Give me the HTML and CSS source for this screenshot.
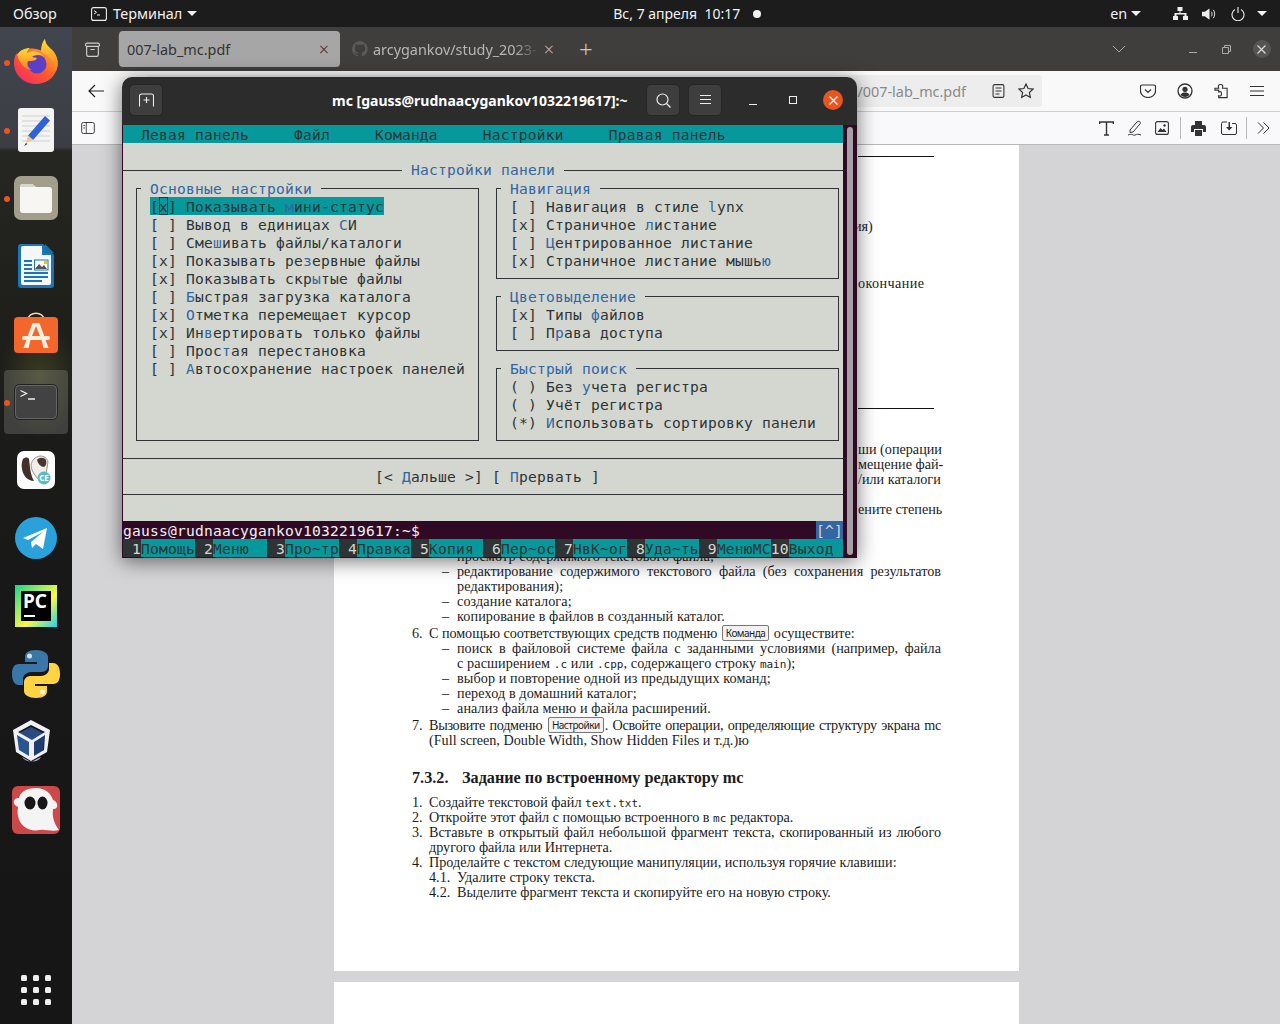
FILE: index.html
```html
<!DOCTYPE html>
<html lang="ru">
<head>
    <meta charset="UTF-8">
    <title>mc</title>
    <link rel="stylesheet" href="styles.css">
</head>
<body>
<div class="desktop">
    <!-- GNOME top bar -->
    <header class="topbar">
        <span class="overview">Обзор</span>
        <span class="app-menu">
            <svg class="ic-term" viewBox="0 0 16 14"><rect x=".6" y=".6" width="14.8" height="12.8" rx="2" fill="none" stroke="#eee" stroke-width="1.1"/><path d="M3 3.5l2.5 1.8L3 7M6 8h3" fill="none" stroke="#eee"/></svg>
            Терминал
            <i class="caret"></i>
        </span>
        <span class="clock">Вс, 7 апреля&nbsp; 10:17</span>
        <i class="notify-dot"></i>
        <span class="lang">en</span>
        <i class="caret caret-lang"></i>
        <span class="tray">
            <svg viewBox="0 0 16 14" width="16" height="14"><path d="M5.5 0h5v4h-2v2h6v3h1.500v4h-5V9h1.500V7.500h-8V9H6v4H1V9h1.500V6h5V4h-2z" fill="#eee"/></svg>
            <svg viewBox="0 0 16 14" width="15" height="14"><path d="M0 4.500h3L8 1v12L3 9.500H0z" fill="#eee"/><path d="M10 4.500c1 1.500 1 3.500 0 5M12 2.500c2 2.500 2 6.500 0 9" fill="none" stroke="#eee"/></svg>
            <svg viewBox="0 0 14 14" width="14" height="14"><path d="M4 2.500a6 6 0 1 0 6 0M7 0v6" fill="none" stroke="#eee" stroke-width="1.100"/></svg>
            <i class="caret"></i>
        </span>
    </header>

    <div class="workspace">
        <!-- dock -->
        <nav class="dock">
            <div class="dock-item running">
                <svg viewBox="0 0 48 48" width="48" height="48">
                    <defs>
                        <linearGradient id="ffa" x1="0" y1="1" x2=".8" y2="0"><stop offset="0" stop-color="#f0246e"/><stop offset=".5" stop-color="#ff5a2c"/><stop offset="1" stop-color="#ffc02e"/></linearGradient>
                        <linearGradient id="ffb" x1="0" y1="0" x2="0" y2="1"><stop offset="0" stop-color="#ffdd3c"/><stop offset="1" stop-color="#ff7a1e"/></linearGradient>
                    </defs>
                    <path d="M33 1c0 5 4 8 8 12 5 6 6 14 3 20-3 8-11 13-20 13C12 46 2 37 2 25c0-4 1-8 3-10l1 5c2-5 6-8 11-9 4-1 9 0 13 2-1-4 0-9 3-12z" fill="url(#ffa)"/>
                    <circle cx="25" cy="26" r="9.500" fill="#5d3fc6"/>
                    <path d="M33 1c0 5 4 8 8 12 5 6 6 14 3 20-1-5-2-10-7-14-3-3-6-3-8-6 0-5 2-9 4-12z" fill="url(#ffb)"/>
                    <path d="M5 17c3-5 8-7 13-7-2 1-3 3-3 5 5-3 12-2 16 3-4-2-9-1-11 1l5 1c-1 3-5 3-9 3-2 3 0 7 4 9-6 0-12-5-15-15z" fill="url(#ffb)"/>
                </svg>
            </div>
            <div class="dock-item running">
                <svg viewBox="0 0 36 44" width="36" height="44">
                    <rect width="36" height="44" rx="3" fill="#f4f4f2"/>
                    <path d="M4 8h28M4 13h28M4 18h28M4 23h28M4 28h28M4 33h28" stroke="#cfcfd2"/>
                    <path d="M27 8l5 4.500-17 19.500-5-4.500z" fill="#2f62d6"/>
                    <path d="M10 27.500l5 4.500-7 3z" fill="#e8c99c"/><path d="M6 38l2-3 1.500 1z" fill="#333"/>
                </svg>
            </div>
            <div class="dock-item running">
                <svg viewBox="0 0 44 44" width="44" height="44">
                    <rect width="44" height="44" rx="7" fill="#a39e8c"/>
                    <path d="M6 11a3 3 0 0 1 3-3h9l4 3h13a3 3 0 0 1 3 3v20a3 3 0 0 1-3 3H9a3 3 0 0 1-3-3z" fill="#f7f6f3"/>
                    <path d="M6 11a3 3 0 0 1 3-3h9l4 3z" fill="#d9d6c9"/>
                </svg>
            </div>
            <div class="dock-item">
                <svg viewBox="0 0 36 44" width="36" height="44">
                    <path d="M3 0h22l11 11v30a3 3 0 0 1-3 3H3a3 3 0 0 1-3-3V3a3 3 0 0 1 3-3z" fill="#1b75b6"/>
                    <path d="M5 2h19v9h9v28a2 2 0 0 1-2 2H5a2 2 0 0 1-2-2V4a2 2 0 0 1 2-2z" fill="#f5f7f8"/>
                    <path d="M27 0l9 9h-9z" fill="#1b6fa8"/>
                    <path d="M6 16h8v2H6zM6 20h8v2H6zM6 24h8v2H6zM6 28h24v2H6zM6 32h24v2H6zM6 36h18v2H6z" fill="#1b75b6"/>
                    <rect x="16.500" y="16" width="13.500" height="10" fill="#fff" stroke="#1b75b6"/>
                    <path d="M17 25l4-5 3 3 2-2 3 4z" fill="#555"/><rect x="26" y="17" width="3" height="3" fill="#f3c300"/>
                </svg>
            </div>
            <div class="dock-item ic-store">
                <svg viewBox="0 0 44 44" width="44" height="44">
                    <path d="M14 9c0-9 16-9 16 0" fill="none" stroke="#f3d7ae" stroke-width="1.500"/>
                    <rect y="6" width="44" height="36" rx="4" fill="#f4672c"/>
                    <path d="M18.500 12h7l9 25h-5l-2-8H16.500l-2 8h-5zM22 15l-4 10h8z" fill="#fdeee2"/>
                    <rect x="8" y="25" width="28" height="4" rx="2" fill="#fdeee2"/>
                </svg>
            </div>
            <div class="dock-item running active">
                <svg viewBox="0 0 44 36" width="44" height="36">
                    <rect x=".5" y=".5" width="43" height="35" rx="5" fill="#424242" stroke="#222"/>
                    <rect x="1.500" y="1.500" width="41" height="33" rx="4" fill="none" stroke="#666"/>
                    <path d="M6.500 6.500l6 3-6 3M14 15h7" fill="none" stroke="#eee" stroke-width="1.300"/>
                </svg>
            </div>
            <div class="dock-item">
                <svg viewBox="0 0 38 38" width="38" height="38">
                    <rect width="38" height="38" rx="7" fill="#fff"/>
                    <path d="M6 8c2-2 5-2 6 0 1 7 1 15 5 22-6 0-11-5-12-12-1-4 0-8 1-10z" fill="#43302a"/>
                    <path d="M14 14c1-5 4-8 9-9 4 0 7 2 8 6l-2 12-7 6c-4-4-8-10-8-15z" fill="#f1eeea" stroke="#9a8f88"/>
                    <path d="M20 9c2-3 7-3 9 0 1 3 0 6-2 7-3 0-6-3-7-7z" fill="#4a362e"/>
                    <circle cx="27" cy="27" r="6.500" fill="#5bbcc6"/>
                    <text class="ce" x="27" y="30">CE</text>
                </svg>
            </div>
            <div class="dock-item">
                <svg viewBox="0 0 42 42" width="42" height="42">
                    <circle cx="21" cy="21" r="21" fill="#2aa1da"/>
                    <path d="M8 21l24-10-4 21-7-5-4 4-1-6 12-10-15 8z" fill="#fff"/>
                </svg>
            </div>
            <div class="dock-item">
                <svg viewBox="0 0 42 42" width="42" height="42">
                    <defs><linearGradient id="pc" x1="0" y1="0" x2="1" y2="1"><stop offset="0" stop-color="#18d68c"/><stop offset=".6" stop-color="#fcf84a"/><stop offset="1" stop-color="#21d0f0"/></linearGradient></defs>
                    <rect width="42" height="42" fill="url(#pc)"/>
                    <rect x="6" y="6" width="30" height="30" fill="#000"/>
                    <text class="pc" x="8" y="23">PC</text>
                    <rect x="9" y="30" width="11" height="2" fill="#fff"/>
                </svg>
            </div>
            <div class="dock-item">
                <svg viewBox="0 0 48 48" width="48" height="48">
                    <path d="M24 0c-8 0-11 3-11 7v5h12v2H7c-5 0-7 4-7 10s2 11 7 11h4v-6c0-4 4-7 8-7h11c3 0 6-3 6-6V7c0-4-5-7-12-7z" fill="#3a76a8"/>
                    <path d="M24 48c8 0 11-3 11-7v-5H23v-2h18c5 0 7-4 7-10s-2-11-7-11h-4v6c0 4-4 7-8 7H18c-3 0-6 3-6 6v9c0 4 5 7 12 7z" fill="#ffd344"/>
                    <circle cx="17.500" cy="6" r="2.500" fill="#cfe2f0"/><circle cx="30.500" cy="42" r="2.500" fill="#fff6d0"/>
                </svg>
            </div>
            <div class="dock-item">
                <svg viewBox="0 0 40 46" width="40" height="46" class="ic-vbox">
                    <path d="M19 8l14 7-14 8-14-8z" fill="#2a4a80"/>
                    <path d="M5 15l14 8v17L7 33z" fill="#2c558f"/><path d="M33 15l-14 8v17l12-7z" fill="#1e3d70"/>
                    <path d="M19 1L38 11l-3 22-16 9-15-9L1 11zM19 6L6 13l14 8 13-8zM5 16l2 15 10 6V23zM33 16l-11 7v14l10-6z" fill="#eef1f6" fill-rule="evenodd"/>
                    <path d="M10 38c4 6 16 6 19 0l-10 5z" fill="#aab3d0"/>
                </svg>
            </div>
            <div class="dock-item">
                <svg viewBox="0 0 48 48" width="48" height="48">
                    <rect width="48" height="48" rx="6" fill="#cd4848"/>
                    <path d="M24 2c9 0 15 5 17 12 3 1 5 4 4 7-1 2-3 2-4 2-1 8 1 14 6 21-7 2-14-1-19 0-10 2-20-3-22-14-1-4 0-7 0-9-2-1-5-3-4-6s3-3 5-3C8 6 15 2 24 2z" fill="#f4f4f4"/>
                    <ellipse cx="18" cy="17" rx="5.500" ry="6.500" fill="#171717"/><ellipse cx="30.500" cy="17" rx="5" ry="6.500" fill="#171717"/>
                </svg>
            </div>
            <div class="apps-grid">
                <i></i><i></i><i></i><i></i><i></i><i></i><i></i><i></i><i></i>
            </div>
        </nav>

        <!-- browser window -->
        <main class="browser">
            <div class="tabbar">
                <svg class="tb-view" viewBox="0 0 16 16" width="17" height="17"><path d="M2.500 5h11v8a1.500 1.500 0 0 1-1.500 1.500H4A1.500 1.500 0 0 1 2.500 13zM1.500 5V3.500A1.500 1.500 0 0 1 3 2h10a1.500 1.500 0 0 1 1.500 1.500V5M6 8h4" fill="none" stroke="#d0cfcc" stroke-width="1.100"/></svg>
                <div class="tab tab-current">
                    <span class="tab-title">007-lab_mc.pdf</span>
                    <span class="tab-x">×</span>
                </div>
                <div class="tab tab-other">
                    <svg viewBox="0 0 16 16" width="16" height="16"><path fill="#5a5957" d="M8 0a8 8 0 0 0-2.500 15.600c.4.100.5-.2.500-.4v-1.400c-2.200.5-2.700-1-2.700-1-.4-.9-.9-1.200-.9-1.200-.7-.5.100-.5.100-.5.800.100 1.200.8 1.200.8.700 1.200 1.900.9 2.300.7.100-.5.300-.9.500-1.100-1.800-.2-3.600-.9-3.600-4 0-.9.300-1.600.8-2.100-.1-.2-.4-1 .1-2.100 0 0 .7-.2 2.200.8a7.600 7.600 0 0 1 4 0c1.500-1 2.200-.8 2.200-.8.400 1.100.2 1.900.1 2.100.5.600.8 1.300.8 2.100 0 3.100-1.900 3.700-3.700 3.900.3.300.6.800.6 1.500v2.200c0 .2.100.5.600.4A8 8 0 0 0 8 0z"/></svg>
                    <span class="tab-title">arcygankov/study_2023-2</span>
                    <span class="tab-x">×</span>
                </div>
                <span class="tab-new">+</span>
                <svg class="tb-list" viewBox="0 0 14 8" width="14" height="8"><path d="M1 1l6 6 6-6" fill="none" stroke="#aaa"/></svg>
                <span class="win-min"></span>
                <svg class="win-restore" viewBox="0 0 9 9" width="9" height="9"><path d="M.5 2.500h6v6h-6zM2.500 2.500v-2h6v6h-2" fill="none" stroke="#aaa"/></svg>
                <span class="win-close"><svg viewBox="0 0 9 9" width="9" height="9"><path d="M.5.5l8 8M8.500.5l-8 8" stroke="#ddd" stroke-width="1.100"/></svg></span>
            </div>

            <div class="navbar">
                <svg class="nav-back" viewBox="0 0 16 14" width="16" height="14"><path d="M7 1L1 7l6 6M1 7h15" fill="none" stroke="#222" stroke-width="1.200"/></svg>
                <div class="urlbar">
                    <span class="url">/007-lab_mc.pdf</span>
                    <svg viewBox="0 0 12 14" width="13" height="14"><rect x=".6" y=".6" width="10.800" height="12.800" rx="1.500" fill="none" stroke="#333" stroke-width="1.100"/><path d="M3 4h6M3 7h6M3 10h4" stroke="#333"/></svg>
                    <svg viewBox="0 0 16 16" width="16" height="16"><path d="M8 1l2.100 4.500 4.900.6-3.600 3.400.9 4.900L8 11.900l-4.300 2.500.9-4.900L1 6.100l4.900-.6z" fill="none" stroke="#333" stroke-width="1.200"/></svg>
                </div>
                <div class="nav-icons">
                    <svg viewBox="0 0 16 14" width="16" height="14"><path d="M2 1h12a1.500 1.500 0 0 1 1.500 1.500V7a7.500 6.500 0 0 1-15 0V2.500A1.500 1.500 0 0 1 2 1zM5 5.500l3 3 3-3" fill="none" stroke="#333" stroke-width="1.200"/></svg>
                    <svg viewBox="0 0 16 16" width="16" height="16"><circle cx="8" cy="8" r="7" fill="none" stroke="#333" stroke-width="1.300"/><circle cx="8" cy="6.300" r="2.600" fill="#333"/><path d="M3.500 12c1-2 2.500-2.500 4.500-2.500s3.500.5 4.500 2.500a6 6 0 0 1-9 0z" fill="#333"/></svg>
                    <svg viewBox="0 0 16 16" width="15" height="16"><path d="M1 5h4c-1-3 0-4 2-4s3 1 2 4h5v10H5v-2c2 1 3 0 3-2s-1-3-3-2V7H1z" fill="none" stroke="#333" stroke-width="1.200"/></svg>
                    <svg viewBox="0 0 14 12" width="14" height="12"><path d="M0 1.500h14M0 6h14M0 10.500h14" stroke="#333" stroke-width="1.200"/></svg>
                </div>
            </div>

            <div class="pdfbar">
                <svg class="pdf-side" viewBox="0 0 16 14" width="16" height="12"><rect x=".6" y=".6" width="14.800" height="12.800" rx="2" fill="none" stroke="#333" stroke-width="1.100"/><path d="M6 1v12M2.500 4H4.500M2.500 7H4.500" stroke="#333"/></svg>
                <div class="pdf-tools">
                    <svg viewBox="0 0 15 15" width="15" height="15"><path d="M.7 3V1h13.600v2M7.500 1v13M5 14h5" fill="none" stroke="#333" stroke-width="1.400"/></svg>
                    <svg viewBox="0 0 15 16" width="15" height="16"><path d="M3 10l7-8c1-1 2-1 3 0s0 2 0 2l-7 8-3 .5zM1 15c4-2 5 1 7 0s3-1 6 0" fill="none" stroke="#333"/></svg>
                    <svg viewBox="0 0 14 14" width="14" height="14"><rect x=".6" y=".6" width="12.800" height="12.800" rx="2" fill="none" stroke="#333" stroke-width="1.100"/><path d="M2.500 11l3-4 2 2 1.500-1.500 2.500 3.500z" fill="#333"/><circle cx="9.500" cy="4.500" r="1.200" fill="#333"/></svg>
                    <i class="pdf-sep sep-a"></i>
                    <svg class="t-print" viewBox="0 0 15 15" width="15" height="15"><path d="M4 0h7v4h2a2 2 0 0 1 2 2v5h-3V8H3v3H0V6a2 2 0 0 1 2-2h2zM4 9h7v6H4z" fill="#333"/></svg>
                    <svg class="t-save" viewBox="0 0 16 14" width="16" height="14"><path d="M6 1H2a1.500 1.500 0 0 0-1.500 1.500V12A1.500 1.500 0 0 0 2 13.500h12a1.500 1.500 0 0 0 1.500-1.500V4A1.500 1.500 0 0 0 14 2.500h-3" fill="none" stroke="#333"/><path d="M7.500 1h1.500v5h2.500L8.200 9.500 5 6h2.500z" fill="#333"/></svg>
                    <i class="pdf-sep sep-b"></i>
                    <svg class="t-more" viewBox="0 0 13 12" width="13" height="12"><path d="M1 .5L6.500 6 1 11.500M6.500.5L12 6l-5.500 5.500" fill="none" stroke="#333"/></svg>
                </div>
            </div>

            <div class="viewer">
                <article class="page">
                    <div class="rule rule-a"></div>
                    <p class="frag frag-a">ия)</p>
                    <p class="frag frag-b">окончание</p>
                    <div class="rule rule-b"></div>
                    <p class="frag frag-c">ши (операции</p>
                    <p class="frag">мещение фай-</p>
                    <p class="frag">/или каталоги</p>
                    <p class="frag frag-d">ените степень</p>

                    <div class="sub-list sub-first">
                        <div class="sub"><span class="dash">–</span><span>просмотр содержимого текстового файла;</span></div>
                        <div class="sub"><span class="dash">–</span><span class="just">редактирование содержимого текстового файла (без сохранения результатов</span></div>
                        <div class="sub"><span class="dash"></span><span>редактирования);</span></div>
                        <div class="sub"><span class="dash">–</span><span>создание каталога;</span></div>
                        <div class="sub"><span class="dash">–</span><span>копирование в файлов в созданный каталог.</span></div>
                    </div>
                    <div class="item item-gap"><span class="num">6.</span><span class="snug">С помощью соответствующих средств подменю <b class="kbd">Команда</b> осуществите:</span></div>
                    <div class="sub-list">
                        <div class="sub"><span class="dash">–</span><span class="just">поиск в файловой системе файла с заданными условиями (например, файла</span></div>
                        <div class="sub"><span class="dash"></span><span>с расширением <code>.c</code> или <code>.cpp</code>, содержащего строку <code>main</code>);</span></div>
                        <div class="sub"><span class="dash">–</span><span>выбор и повторение одной из предыдущих команд;</span></div>
                        <div class="sub"><span class="dash">–</span><span>переход в домашний каталог;</span></div>
                        <div class="sub"><span class="dash">–</span><span>анализ файла меню и файла расширений.</span></div>
                    </div>
                    <div class="item item-gap"><span class="num">7.</span><span class="just tight">Вызовите подменю <b class="kbd">Настройки</b>. Освойте операции, определяющие структуру экрана mc</span></div>
                    <div class="item"><span class="num"></span><span>(Full screen, Double Width, Show Hidden Files и т.д.)ю</span></div>

                    <h3 class="heading"><span class="heading-num">7.3.2.</span>Задание по встроенному редактору mc</h3>

                    <div class="item"><span class="num">1.</span><span>Создайте текстовой файл <code>text.txt</code>.</span></div>
                    <div class="item"><span class="num">2.</span><span>Откройте этот файл с помощью встроенного в <code>mc</code> редактора.</span></div>
                    <div class="item"><span class="num">3.</span><span class="just">Вставьте в открытый файл небольшой фрагмент текста, скопированный из любого</span></div>
                    <div class="item"><span class="num"></span><span>другого файла или Интернета.</span></div>
                    <div class="item"><span class="num">4.</span><span>Проделайте с текстом следующие манипуляции, используя горячие клавиши:</span></div>
                    <div class="item item-sub"><span class="num-sub">4.1.</span><span>Удалите строку текста.</span></div>
                    <div class="item item-sub"><span class="num-sub">4.2.</span><span>Выделите фрагмент текста и скопируйте его на новую строку.</span></div>
                </article>
                <div class="page page-next"></div>
            </div>
        </main>
    </div>

    <!-- terminal window with mc -->
    <section class="terminal">
        <div class="term-head">
            <span class="head-btn head-new">
                <svg viewBox="0 0 15 14" width="15" height="14"><path d="M.5 13.500V3a2 2 0 0 1 2-2h10a2 2 0 0 1 2 2v10.500M7.500 4v6M4.500 7h6" fill="none" stroke="#eee" stroke-width="1.100"/></svg>
            </span>
            <span class="term-title">mc [gauss@rudnaacygankov1032219617]:~</span>
            <span class="head-btn head-search">
                <svg viewBox="0 0 15 15" width="15" height="15"><circle cx="6.500" cy="6.500" r="5.500" fill="none" stroke="#eee" stroke-width="1.200"/><path d="M10.500 10.500l4 4" stroke="#eee" stroke-width="1.200"/></svg>
            </span>
            <span class="head-btn head-menu">
                <svg viewBox="0 0 11 10" width="11" height="10"><path d="M0 .5h11M0 4.500h11M0 8.500h11" stroke="#eee"/></svg>
            </span>
            <i class="ctl-min"></i>
            <i class="ctl-max"></i>
            <span class="ctl-close"><svg viewBox="0 0 9 9" width="9" height="9"><path d="M.5.5l8 8M8.500.5l-8 8" stroke="#fff" stroke-width="1.300"/></svg></span>
        </div>
        <div class="term-body">
            <div class="screen">
                <div class="mc-menu">  Левая панель     Файл     Команда     Настройки     Правая панель</div>
                <div class="dlg">
                    <div class="dlg-title"><span>Настройки панели</span></div>
                    <div class="dlg-cols">
                        <div class="box box-main">
                            <span class="legend">Основные настройки</span>
                            <div class="opt sel">[<span class="cur">x</span>] Показывать <b class="hk">м</b>ини-статус</div>
                            <div class="opt">[ ] Вывод в единицах <b class="hk">С</b>И</div>
                            <div class="opt">[ ] Сме<b class="hk">ш</b>ивать файлы/каталоги</div>
                            <div class="opt">[x] Показывать ре<b class="hk">з</b>ервные файлы</div>
                            <div class="opt">[x] Показывать скр<b class="hk">ы</b>тые файлы</div>
                            <div class="opt">[ ] <b class="hk">Б</b>ыстрая загрузка каталога</div>
                            <div class="opt">[x] <b class="hk">О</b>тметка перемещает курсор</div>
                            <div class="opt">[x] Ин<b class="hk">в</b>ертировать только файлы</div>
                            <div class="opt">[ ] Прос<b class="hk">т</b>ая перестановка</div>
                            <div class="opt">[ ] <b class="hk">А</b>втосохранение настроек панелей</div>
                        </div>
                        <div class="col-right">
                            <div class="box">
                                <span class="legend">Навигация</span>
                                <div class="opt">[ ] Навигация в стиле <b class="hk">l</b>ynx</div>
                                <div class="opt">[x] Страничное <b class="hk">л</b>истание</div>
                                <div class="opt">[ ] <b class="hk">Ц</b>ентрированное листание</div>
                                <div class="opt">[x] Страничное листание мышь<b class="hk">ю</b></div>
                            </div>
                            <div class="box">
                                <span class="legend">Цветовыделение</span>
                                <div class="opt">[x] Типы <b class="hk">ф</b>айлов</div>
                                <div class="opt">[ ] П<b class="hk">р</b>ава доступа</div>
                            </div>
                            <div class="box">
                                <span class="legend">Быстрый поиск</span>
                                <div class="opt">( ) Без <b class="hk">у</b>чета регистра</div>
                                <div class="opt">( ) Учёт регистра</div>
                                <div class="opt">(*) <b class="hk">И</b>спользовать сортировку панели</div>
                            </div>
                        </div>
                    </div>
                    <div class="dlg-rule dlg-rule-a"></div>
                    <div class="dlg-buttons">[&lt; <b class="hk">Д</b>альше &gt;] [ <b class="hk">П</b>рервать ]</div>
                    <div class="dlg-rule dlg-rule-b"></div>
                </div>
                <div class="prompt"><span>gauss@rudnaacygankov1032219617:~$</span><span class="prompt-up">[^]</span></div>
                <div class="fkeys">
                    <span class="fn"> 1</span><span class="fl">Помощь</span>
                    <span class="fn"> 2</span><span class="fl">Меню  </span>
                    <span class="fn"> 3</span><span class="fl">Про~тр</span>
                    <span class="fn"> 4</span><span class="fl">Правка</span>
                    <span class="fn"> 5</span><span class="fl">Копия </span>
                    <span class="fn"> 6</span><span class="fl">Пер~ос</span>
                    <span class="fn"> 7</span><span class="fl">НвК~ог</span>
                    <span class="fn"> 8</span><span class="fl">Уда~ть</span>
                    <span class="fn"> 9</span><span class="fl">МенюМС</span>
                    <span class="fn">10</span><span class="fl">Выход </span>
                </div>
            </div>
            <div class="scroll"><i></i></div>
        </div>
    </section>
</div>
</body>
</html>
```

FILE: styles.css
```css
html, body {
    margin: 0;
    padding: 0;
    background: #111;
}

.desktop {
    position: relative;
    width: 1280px;
    height: 1024px;
    overflow: hidden;
    font-family: "Noto Sans", sans-serif;
}

/* top bar */
.topbar {
    display: flex;
    align-items: center;
    height: 27px;
    background: #1c1c1c;
    color: #f2f2f2;
    font-size: 14.4px;
}

.overview { margin-left: 13px; }

.app-menu {
    display: flex;
    align-items: center;
    margin-left: 34px;
}

.ic-term {
    width: 16px;
    height: 14px;
    margin-right: 6px;
}

.caret {
    display: inline-block;
    width: 0;
    height: 0;
    margin-left: 5px;
    border-left: 5px solid transparent;
    border-right: 5px solid transparent;
    border-top: 5px solid #f2f2f2;
}

.clock {
    margin-left: 416px;
    font-size: 14px;
}

.notify-dot {
    width: 8px;
    height: 8px;
    margin-left: 13px;
    border-radius: 50%;
    background: #f2f2f2;
}

.lang { margin-left: 349px; }
.caret-lang { margin-left: 4px; }

.tray {
    display: flex;
    align-items: center;
    gap: 14px;
    margin-left: 31px;
}

.tray .caret { margin-left: -2px; }

.workspace {
    display: flex;
    height: 997px;
}

/* dock */
.dock {
    display: flex;
    flex-direction: column;
    width: 72px;
    flex: none;
    padding-top: 1px;
    box-sizing: border-box;
    background:
        radial-gradient(ellipse 40px 60px at 40px 350px, rgba(92, 96, 40, .45), transparent),
        linear-gradient(#41454e 0, #3c3e44 120px, #262622 124px, #1e1e1b 300px, #181818 560px, #161616 100%);
}

.dock-item {
    position: relative;
    display: flex;
    align-items: center;
    justify-content: center;
    height: 68px;
}

.dock-item.running::before {
    content: "";
    position: absolute;
    left: 4px;
    top: 32px;
    width: 6px;
    height: 6px;
    border-radius: 50%;
    background: #e95420;
}

.dock-item.active {
    height: 64px;
    margin: 2px 4px;
    border-radius: 4px;
    background: rgba(255, 255, 255, .16);
}

.dock-item.active::before {
    left: 0;
    top: 30px;
}

.ic-store svg { margin-top: -3px; }

.ce {
    font: bold 8px "Noto Sans", sans-serif;
    fill: #fff;
    text-anchor: middle;
}

.pc {
    font: bold 19px "Noto Sans", sans-serif;
    fill: #fff;
}

.ic-vbox { margin-right: 8px; }

.apps-grid {
    display: grid;
    grid-template-columns: repeat(3, 6px);
    gap: 6px;
    margin: auto 0 19px 21px;
}

.apps-grid i {
    height: 6px;
    border-radius: 1.5px;
    background: #eee;
}

/* browser */
.browser {
    display: flex;
    flex-direction: column;
    flex: 1;
    min-width: 0;
}

.tabbar {
    display: flex;
    align-items: center;
    height: 44px;
    flex: none;
    background: #3f3e3c;
    color: #c8c7c5;
    font-size: 14.4px;
}

.tb-view { margin-left: 12px; }

.tab {
    display: flex;
    align-items: center;
    height: 36px;
    box-sizing: border-box;
    border-radius: 4px;
}

.tab-current {
    width: 221px;
    margin-left: 18px;
    padding: 0 11px 0 8px;
    background: #a6a6a6;
    color: #333;
    box-shadow: -5px 0 0 -4px #55544f;
}

.tab-title {
    flex: 1;
    white-space: nowrap;
    overflow: hidden;
}

.tab-x {
    font-size: 18px;
    font-weight: 300;
    line-height: 1;
}

.tab-other {
    width: 214px;
    margin-left: 4px;
    padding: 0 4px 0 8px;
    gap: 5px;
    color: #b8b7b5;
}

.tab-other .tab-title {
    -webkit-mask-image: linear-gradient(90deg, #000 85%, transparent);
    mask-image: linear-gradient(90deg, #000 85%, transparent);
}

.tab-new {
    margin-left: 21px;
    font-size: 24px;
    font-weight: 300;
    line-height: 1;
}

.tb-list { margin-left: 519px; }

.win-min {
    width: 8px;
    height: 1px;
    margin: 6px 0 0 63px;
    background: #aaa;
}

.win-restore { margin-left: 25px; }

.win-close {
    display: flex;
    align-items: center;
    justify-content: center;
    width: 18px;
    height: 18px;
    margin-left: 22px;
    border-radius: 50%;
    background: #565553;
}

.navbar {
    display: flex;
    align-items: center;
    height: 41px;
    flex: none;
    box-sizing: border-box;
    border-bottom: 1px solid #cfcfd0;
    background: #f9f9fa;
}

.nav-back { margin-left: 16px; }

.urlbar {
    display: flex;
    align-items: center;
    justify-content: flex-end;
    gap: 13px;
    width: 896px;
    height: 32px;
    margin-left: 42px;
    padding-right: 8px;
    box-sizing: border-box;
    border-radius: 4px;
    background: #ededee;
}

.url {
    margin-right: 13px;
    color: #8a8a8c;
    font-size: 14.4px;
}

.nav-icons {
    display: flex;
    align-items: center;
    gap: 21px;
    margin-left: 98px;
}

.pdfbar {
    display: flex;
    align-items: center;
    justify-content: space-between;
    height: 33px;
    flex: none;
    box-sizing: border-box;
    padding: 0 10px 0 8px;
    border-bottom: 1px solid #b8b8b9;
    background: #f9f9fb;
}

.pdf-tools {
    display: flex;
    align-items: center;
    gap: 13px;
}

.pdf-sep {
    width: 1px;
    height: 22px;
    background: #b8b8b9;
}

.sep-a { margin-left: -2px; }
.t-print { margin-left: -3px; }
.t-save { margin-left: 2px; }
.sep-b { margin-left: -4px; }
.t-more { margin-left: -3px; }

/* pdf pages */
.viewer {
    flex: 1;
    overflow: hidden;
    padding-left: 1px;
    background: #d4d4d7;
}

.page {
    display: flow-root;
    box-sizing: border-box;
    width: 685px;
    height: 826px;
    margin: 0 auto 11px;
    padding: 0 78px;
    background: #fff;
    color: #1c1c1c;
    font: 14.2px/15px "Liberation Serif", serif;
}

.page-next { height: 60px; }

.rule {
    height: 1px;
    margin-left: 446px;
    margin-right: 7px;
    background: #111;
}

.rule-a { margin-top: 11px; }
.rule-b { margin-top: 117px; }

.frag {
    margin: 0 0 0 446px;
    white-space: nowrap;
}

.frag-a {
    margin-top: 62px;
    margin-left: 442px;
}

.frag-b {
    margin-top: 42px;
    letter-spacing: .4px;
}

.frag-c { margin-top: 33px; }
.frag-d { margin-top: 15px; }

.sub-list { padding-left: 17px; }
.sub-first { margin-top: 32px; }

.sub, .item {
    display: flex;
    height: 15px;
    white-space: nowrap;
}

.sub { letter-spacing: .1px; }

.dash {
    flex: none;
    width: 28px;
    padding-left: 13px;
    box-sizing: border-box;
}

.num {
    flex: none;
    width: 17px;
}

.num-sub {
    flex: none;
    width: 28px;
}

.item-sub { padding-left: 17px; }
.item-gap { margin-top: 2px; }

.just {
    flex: 1;
    white-space: normal;
    text-align: justify;
    text-align-last: justify;
    letter-spacing: 0;
}

.tight { letter-spacing: -.3px; }
.snug { letter-spacing: -.06px; }

.kbd {
    display: inline-block;
    height: 16px;
    margin: -1px 1px 0;
    padding: 0 3px;
    box-sizing: border-box;
    border: 1px solid #777;
    border-radius: 2px;
    background: #f2f2f2;
    font: 400 10px/14px "Noto Sans", sans-serif;
    letter-spacing: -.5px;
    vertical-align: top;
}

code {
    font: 11px/15px "DejaVu Sans Mono", monospace;
    letter-spacing: 0;
}

.heading {
    height: 18px;
    margin: 21px 0 8px;
    font-size: 16.2px;
    line-height: 18px;
    white-space: nowrap;
}

.heading-num {
    display: inline-block;
    width: 50px;
}

/* terminal */
.terminal {
    position: absolute;
    left: 122px;
    top: 77px;
    width: 735px;
    height: 481px;
    border-radius: 10px 10px 0 0;
    overflow: hidden;
    background: #2c2c2c;
    box-shadow: 0 3px 20px rgba(0, 0, 0, .55);
}

.term-head {
    display: flex;
    align-items: center;
    height: 46px;
    margin-bottom: 2px;
    color: #fff;
}

.head-btn {
    display: flex;
    align-items: center;
    justify-content: center;
    width: 34px;
    height: 32px;
    box-sizing: border-box;
    border: 1px solid #262626;
    border-radius: 5px;
    background: #3e3e3e;
}

.head-new { margin-left: 7px; }

.term-title {
    width: 296px;
    margin-left: 169px;
    font-size: 14px;
    font-weight: 700;
    white-space: nowrap;
}

.head-search { margin-left: 18px; }
.head-menu { margin-left: 8px; }

.ctl-min {
    width: 8px;
    height: 1px;
    margin: 8px 0 0 27px;
    background: #eee;
}

.ctl-max {
    width: 6px;
    height: 6px;
    margin-left: 32px;
    border: 1px solid #eee;
}

.ctl-close {
    display: flex;
    align-items: center;
    justify-content: center;
    width: 20px;
    height: 20px;
    margin-left: 26px;
    border-radius: 50%;
    background: #e95420;
}

.term-body {
    display: flex;
    height: 433px;
    background: #300a24;
}

.screen {
    width: 720px;
    margin-left: 1px;
    font: 14.6px/20px "DejaVu Sans Mono", monospace;
    letter-spacing: .21px;
    color: #2e3436;
}

.mc-menu, .opt, .legend, .dlg-title span, .dlg-buttons, .prompt span, .fn, .fl {
    white-space: pre;
}

.mc-menu {
    height: 18px;
    background: #06989a;
}

.hk {
    color: #3465a4;
    font-weight: 400;
}

.dlg {
    height: 378px;
    background: #d3d7cf;
    overflow: hidden;
}

.dlg-title {
    display: flex;
    align-items: center;
    height: 18px;
    margin-top: 18px;
    color: #3465a4;
}

.dlg-title::before,
.dlg-title::after {
    content: "";
    flex: 1;
    height: 1px;
    background: #2e3436;
}

.dlg-title span { padding: 0 9px; }

.dlg-cols {
    display: flex;
    gap: 17px;
    margin: 9px 0 0 13px;
}

.col-right {
    display: flex;
    flex-direction: column;
    gap: 17px;
}

.box {
    position: relative;
    width: 343px;
    box-sizing: border-box;
    padding: 8px 0 9px 13px;
    border: 1px solid #2e3436;
}

.box-main { height: 253px; }

.legend {
    position: absolute;
    left: 4px;
    top: -10px;
    height: 18px;
    padding: 0 9px;
    background: #d3d7cf;
    color: #3465a4;
}

.opt { height: 18px; }

.sel {
    width: 234px;
    background: #06989a;
}

.cur {
    display: inline-block;
    height: 18px;
    outline: 1px solid #2e3436;
    outline-offset: -1px;
}

.dlg-rule {
    height: 1px;
    background: #2e3436;
}

.dlg-rule-a { margin-top: 17px; }
.dlg-rule-b { margin-top: 9px; }

.dlg-buttons {
    height: 18px;
    margin-top: 8px;
    padding-left: 252px;
}

.prompt {
    display: flex;
    justify-content: space-between;
    height: 18px;
    color: #f2f2f2;
}

.prompt-up {
    background: #3465a4;
    color: #d3d7cf;
}

.fkeys {
    display: flex;
    height: 18px;
}

.fn {
    background: #2e3436;
    color: #d3d7cf;
}

.fl { background: #06989a; }

.scroll {
    width: 14px;
    padding-top: 2px;
}

.scroll i {
    display: block;
    width: 6px;
    height: 428px;
    margin-left: 4px;
    border-radius: 3px;
    background: #a89fa6;
}
```
